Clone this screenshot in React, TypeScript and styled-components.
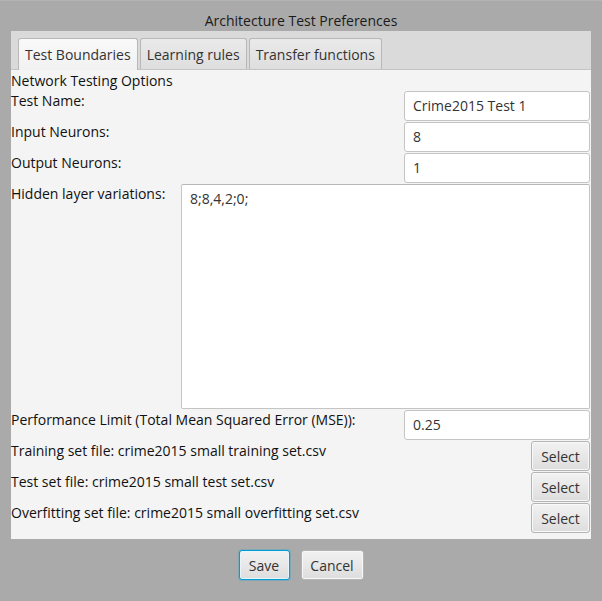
import React, { FC } from 'react'
import styled, { createGlobalStyle, css } from 'styled-components'

const Global = createGlobalStyle`
  html, body {
    margin: 0;
    padding: 0;
    background: #aaaaaa;
  }
  body {
    font-family: "Open Sans", "Noto Sans", sans-serif;
    font-size: 14px;
  }
`;

const Window = styled.div`
  width: 602px;
  height: 601px;
  background: #aaaaaa;
  display: flex;
  flex-direction: column;
  box-sizing: border-box;
  border-top: 1px solid #b4b4b4;
`;

const Title = styled.div`
  height: 30px;
  line-height: 40px;
  text-align: center;
  color: #1a1a1a;
  font-size: 14px;
`;

const Panel = styled.div`
  margin: 0 11px;
  display: flex;
  flex-direction: column;
`;

const TabHeader = styled.div`
  height: 38px;
  background: #dadada;
  border-bottom: 1px solid #c4c4c4;
  display: flex;
  align-items: flex-end;
  padding-left: 7px;
  gap: 2px;
`;

const Tab = styled.div<{ $active?: boolean }>`
  height: 31px;
  box-sizing: border-box;
  padding: 0 6px;
  line-height: 31px;
  color: #333;
  border: 1px solid #b8b8b8;
  border-bottom: none;
  border-radius: 3px 3px 0 0;
  background: linear-gradient(#eaeaea, #dedede);
  ${p => p.$active && css`
    background: linear-gradient(#f9f9f9, #f1f1f1);
    height: 32px;
    margin-bottom: -1px;
  `}
`;

const Content = styled.div`
  background: #f4f4f4;
  padding: 0 1px 6px 0;
  display: flex;
  flex-direction: column;
  gap: 1px;
`;

const Heading = styled.div`
  height: 20px;
  line-height: 22px;
  color: #111;
`;

const Row = styled.div<{ $tall?: boolean }>`
  display: flex;
  justify-content: space-between;
  align-items: flex-start;
  height: ${p => (p.$tall ? '225px' : '30px')};
`;

const Label = styled.span<{ $width?: number }>`
  color: #111;
  line-height: 20px;
  ${p => p.$width && css`width: ${p.$width}px; flex: none;`}
`;

const Field = styled.div`
  width: 186px;
  height: 30px;
  box-sizing: border-box;
  background: #fff;
  border: 1px solid #c4c4c4;
  border-radius: 3px;
  padding: 0 8px;
  line-height: 28px;
  color: #333;
`;

const Area = styled.div`
  flex: 1;
  height: 225px;
  box-sizing: border-box;
  background: #fff;
  border: 1px solid #c4c4c4;
  border-top-color: #b8b8b8;
  border-radius: 2px;
  padding: 4px 8px;
  line-height: 20px;
  color: #333;
`;

const Button = styled.button<{ $focus?: boolean; $width: number }>`
  width: ${p => p.$width}px;
  height: 30px;
  box-sizing: border-box;
  padding: 0;
  font-family: inherit;
  font-size: 14px;
  color: #333;
  border: 1px solid #b4b4b4;
  border-radius: 3px;
  background: linear-gradient(#f2f2f2, #dddddd);
  box-shadow: inset 0 0 0 1px #f8f8f8;
  ${p => p.$focus && css`
    border-color: #039ed3;
    box-shadow: inset 0 0 0 1px #e8f4fa, 0 0 0 1px rgba(3, 158, 211, 0.25);
  `}
`;

const Footer = styled.div`
  display: flex;
  justify-content: center;
  gap: 11px;
  padding-top: 11px;
`;

type FieldRow = { label: string; value: string }

const fields: FieldRow[] = [
  { label: 'Test Name:', value: 'Crime2015 Test 1' },
  { label: 'Input Neurons:', value: '8' },
  { label: 'Output Neurons:', value: '1' },
]

const files = [
  'Training set file: crime2015 small training set.csv',
  'Test set file: crime2015 small test set.csv',
  'Overfitting set file: crime2015 small overfitting set.csv',
]

const App: FC = () => {
  return (
    <Window>
      <Global />
      <Title>Architecture Test Preferences</Title>
      <Panel>
        <TabHeader>
          <Tab $active>Test Boundaries</Tab>
          <Tab>Learning rules</Tab>
          <Tab>Transfer functions</Tab>
        </TabHeader>
        <Content>
          <Heading>Network Testing Options</Heading>
          {fields.map(f => (
            <Row key={f.label}>
              <Label>{f.label}</Label>
              <Field>{f.value}</Field>
            </Row>
          ))}
          <Row $tall>
            <Label $width={170}>Hidden layer variations:</Label>
            <Area>8;8,4,2;0;</Area>
          </Row>
          <Row>
            <Label>Performance Limit (Total Mean Squared Error (MSE)):</Label>
            <Field>0.25</Field>
          </Row>
          {files.map(f => (
            <Row key={f}>
              <Label>{f}</Label>
              <Button $width={59}>Select</Button>
            </Row>
          ))}
        </Content>
      </Panel>
      <Footer>
        <Button $focus $width={51}>Save</Button>
        <Button $width={63}>Cancel</Button>
      </Footer>
    </Window>
  )
}

export default App
